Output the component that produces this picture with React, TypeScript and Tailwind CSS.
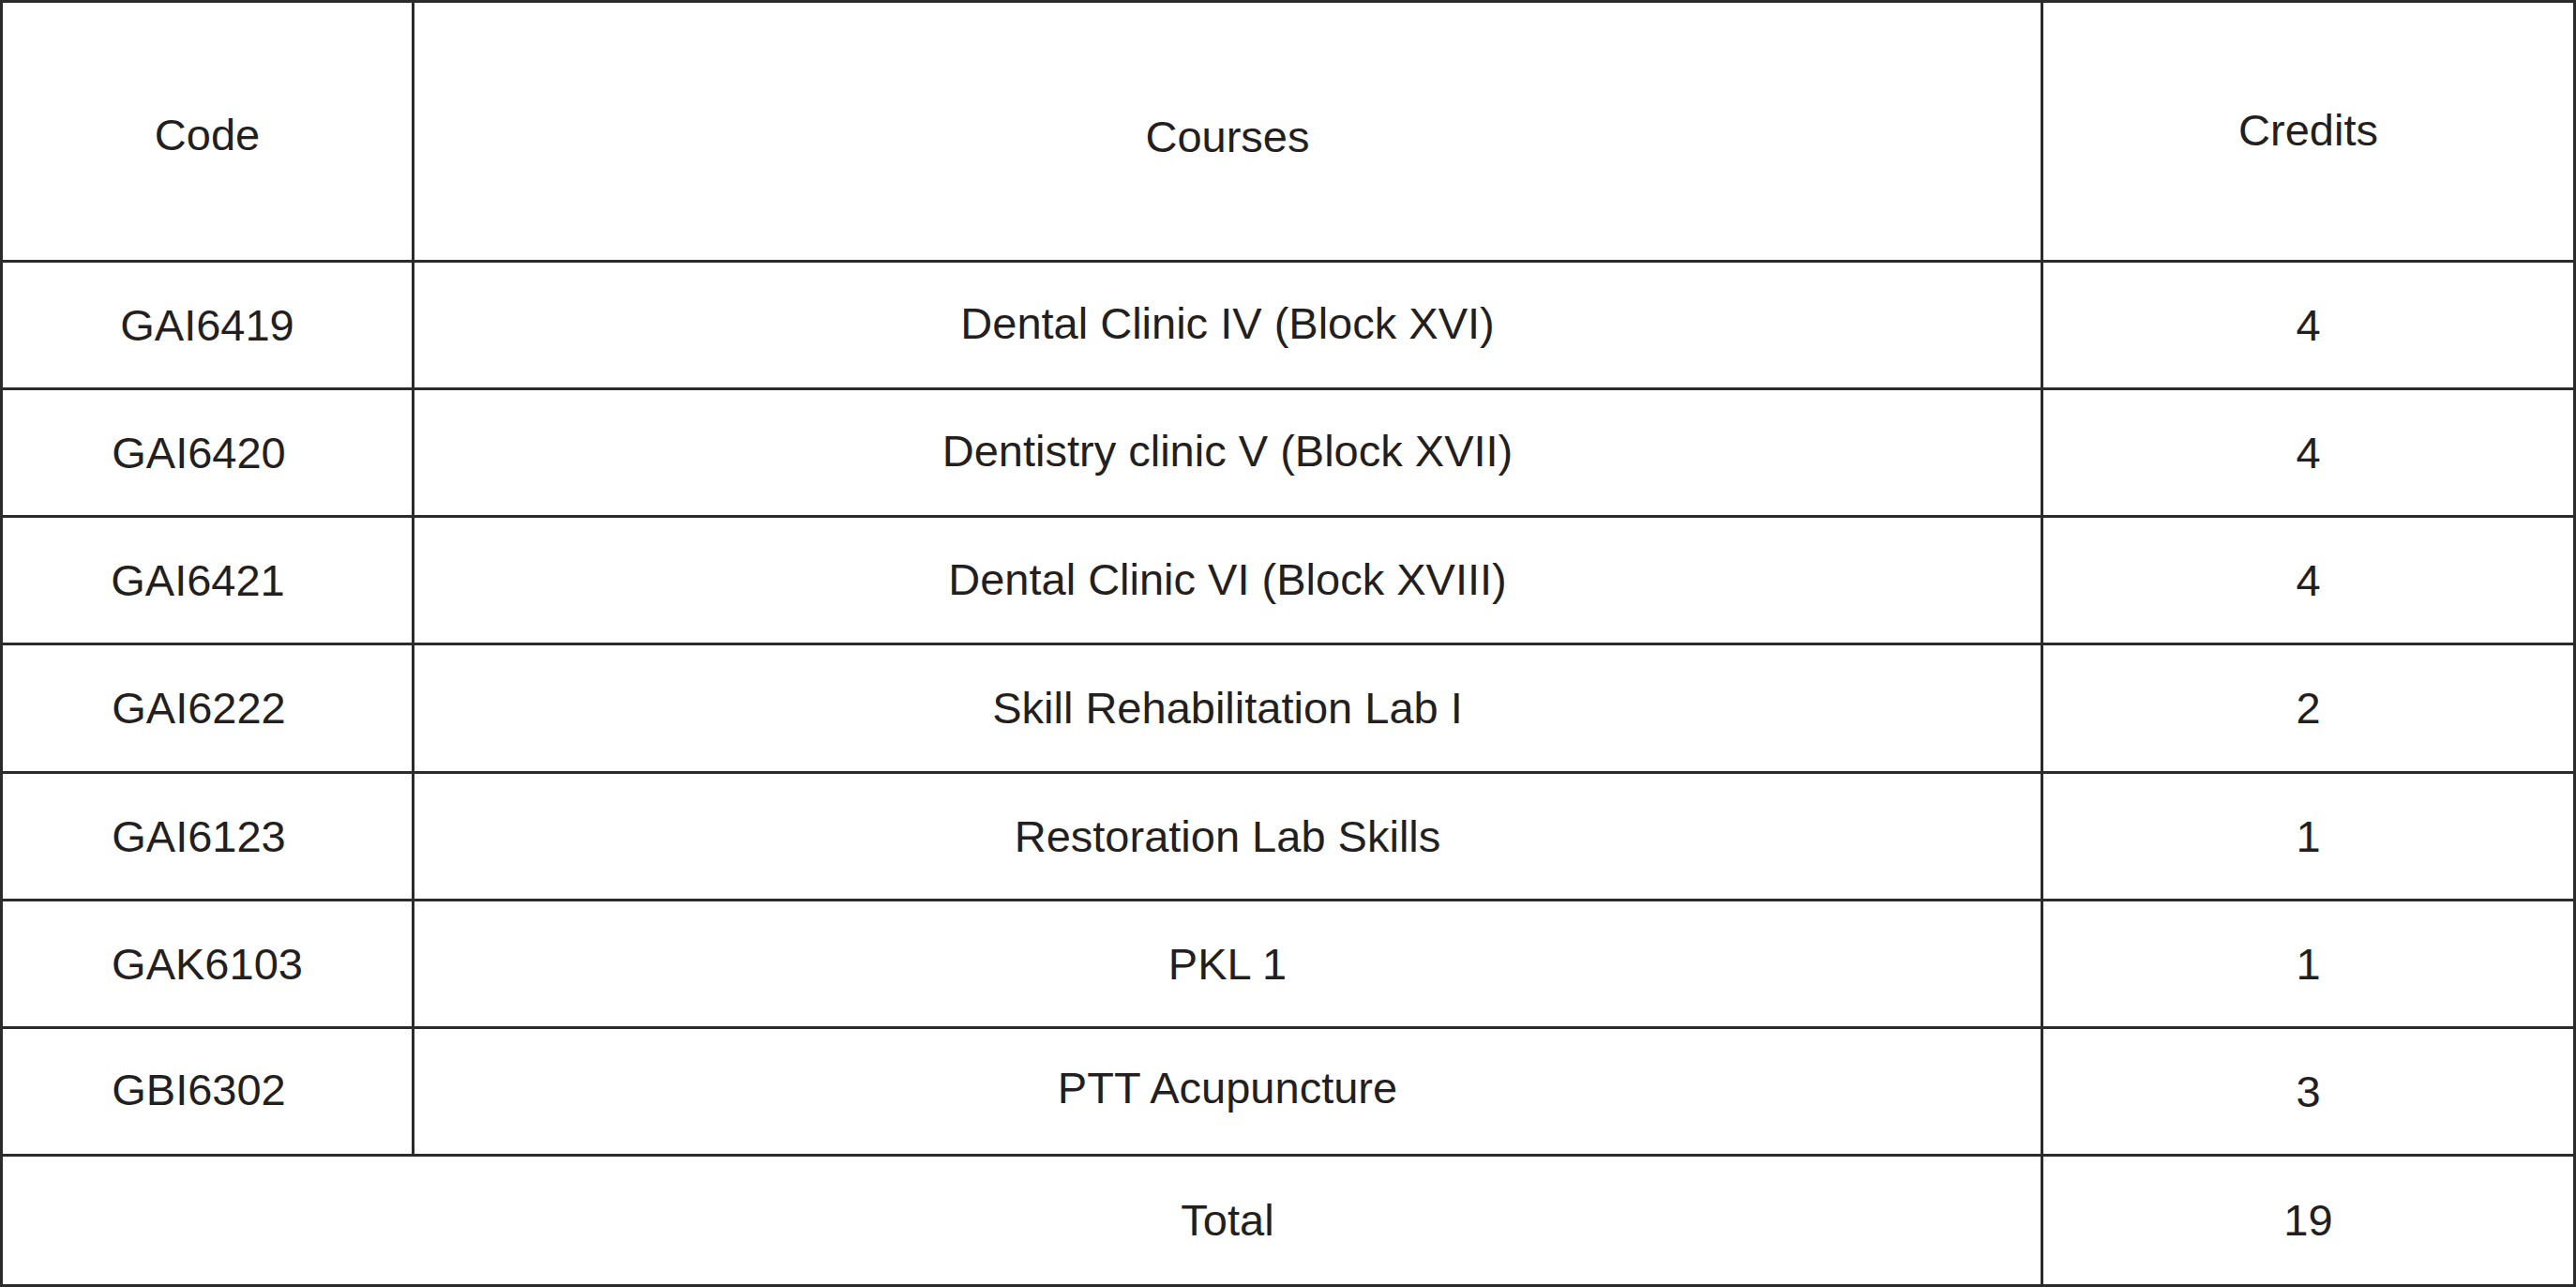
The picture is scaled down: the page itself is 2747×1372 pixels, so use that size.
const courses = [
  { code: "GAI6419", name: "Dental Clinic IV (Block XVI)", credits: "4", codeCls: "", nameCls: "pb-[4px]" },
  { code: "GAI6420", name: "Dentistry clinic V (Block XVII)", credits: "4", codeCls: "pr-[18px]", nameCls: "pb-[4px]" },
  { code: "GAI6421", name: "Dental Clinic VI (Block XVIII)", credits: "4", codeCls: "pr-[20px]", nameCls: "pb-[2px]" },
  { code: "GAI6222", name: "Skill Rehabilitation Lab I", credits: "2", codeCls: "pr-[18px]", nameCls: "" },
  { code: "GAI6123", name: "Restoration Lab Skills", credits: "1", codeCls: "pr-[18px]", nameCls: "" },
  { code: "GAK6103", name: "PKL 1", credits: "1", codeCls: "", nameCls: "" },
  { code: "GBI6302", name: "PTT Acupuncture", credits: "3", codeCls: "pr-[18px] pb-[4px]", nameCls: "pb-[8px]" },
];

const cell = "flex items-center justify-center border-[#2b2b2b]";

export default function App() {
  return (
    <main className="bg-white font-['Liberation_Sans',Arial,sans-serif] text-[47px] leading-none text-[#231f20]">
      <div className="grid h-[1372px] w-[2747px] grid-cols-[439px_1737px_1fr] grid-rows-[277px_repeat(8,1fr)] border-[3px] border-[#2b2b2b]">
        <div className={`${cell} border-r-[3px] border-b-[3px] pt-[6px]`}>Code</div>
        <div className={`${cell} border-r-[3px] border-b-[3px] pt-[10px]`}>Courses</div>
        <div className={`${cell} border-b-[3px] pb-[4px]`}>Credits</div>

        {courses.map((c) => (
          <div key={c.code} className="contents">
            <div className={`${cell} border-r-[3px] border-b-[3px] ${c.codeCls}`}>{c.code}</div>
            <div className={`${cell} border-r-[3px] border-b-[3px] ${c.nameCls}`}>{c.name}</div>
            <div className={`${cell} border-b-[3px]`}>{c.credits}</div>
          </div>
        ))}

        <div className={cell} />
        <div className={`${cell} border-r-[3px]`}>Total</div>
        <div className={cell}>19</div>
      </div>
    </main>
  );
}
